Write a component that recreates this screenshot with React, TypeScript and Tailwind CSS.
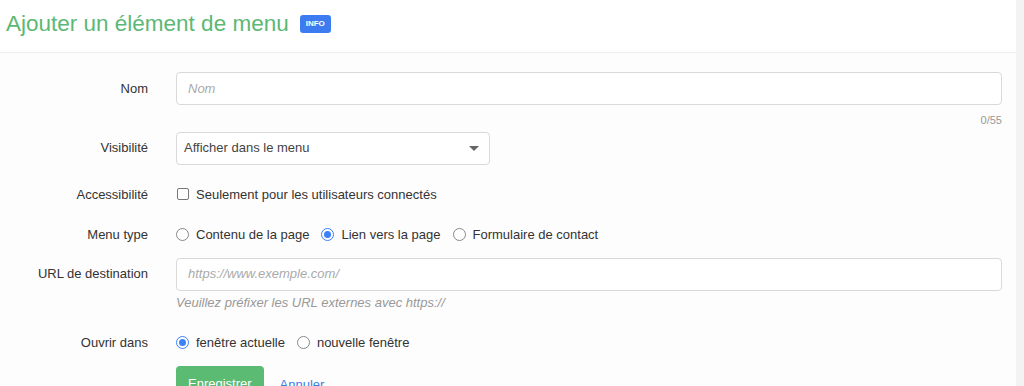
import React from 'react';

const font = { fontFamily: '"Liberation Sans", Arial, sans-serif' };

function Label({ children }: { children: React.ReactNode }): JSX.Element {
  return <div className="w-[148px] shrink-0 text-right text-[13px] text-[#333]">{children}</div>;
}

function Radio({ checked, label }: { checked?: boolean; label: string }): JSX.Element {
  return (
    <label className="flex items-center gap-[7px] text-[13px] text-[#333]">
      {checked ? (
        <span className="flex h-[13px] w-[13px] items-center justify-center rounded-full border border-[#3b82f6] bg-white">
          <span className="h-[7px] w-[7px] rounded-full bg-[#3b82f6]" />
        </span>
      ) : (
        <span className="h-[13px] w-[13px] rounded-full border border-[#888] bg-white" />
      )}
      {label}
    </label>
  );
}

export default function App(): JSX.Element {
  return (
    <div className="flex h-[386px] w-[1024px] overflow-hidden bg-white" style={font}>
      <div className="flex w-[1016px] flex-col">
        <div className="flex h-[53px] shrink-0 items-center gap-[11px] border-b border-[#ececec] bg-white pl-[6px] pb-[4px]">
          <h1 className="text-[22.5px] text-[#5cb874]">Ajouter un élément de menu</h1>
          <span className="rounded-[3px] bg-[#3c7cf0] px-[6px] py-[5px] text-[8px] font-bold leading-none text-white">INFO</span>
        </div>
        <div className="flex flex-1 flex-col bg-[#fdfdfd] pr-[14px]">
          <div className="mt-[19px] flex shrink-0 items-center gap-[28px]">
            <Label>Nom</Label>
            <div className="flex h-[33px] flex-1 items-center rounded-[4px] border border-[#d9d9d9] bg-white px-[11px] text-[13px] italic text-[#aaa]">Nom</div>
          </div>
          <div className="mt-[7px] text-right text-[11px] text-[#999]">0/55</div>
          <div className="mt-[3px] flex shrink-0 items-center gap-[28px]">
            <Label>Visibilité</Label>
            <div className="flex h-[33px] w-[314px] items-center justify-between rounded-[4px] border border-[#d9d9d9] bg-white pl-[7px] pr-[10px] text-[13px] text-[#444]">
              <span>Afficher dans le menu</span>
              <span className="h-0 w-0 border-x-[5px] border-t-[5px] border-x-transparent border-t-[#666]" />
            </div>
          </div>
          <div className="mt-[20px] flex shrink-0 items-center gap-[28px]">
            <Label>Accessibilité</Label>
            <label className="flex items-center gap-[7px] text-[13px] text-[#333]">
              <span className="ml-[1px] h-[12px] w-[12px] rounded-[2px] border border-[#777] bg-white" />
              Seulement pour les utilisateurs connectés
            </label>
          </div>
          <div className="mt-[21px] flex shrink-0 items-center gap-[28px]">
            <Label>Menu type</Label>
            <div className="flex items-center gap-[12px]">
              <Radio label="Contenu de la page" />
              <Radio checked label="Lien vers la page" />
              <Radio label="Formulaire de contact" />
            </div>
          </div>
          <div className="mt-[13px] flex shrink-0 items-center gap-[28px]">
            <Label>URL de destination</Label>
            <div className="flex h-[33px] flex-1 items-center rounded-[4px] border border-[#d9d9d9] bg-white px-[11px] text-[13px] italic text-[#aaa]">https://www.exemple.com/</div>
          </div>
          <div className="mt-[2px] pl-[176px] text-[13px] italic text-[#999]">Veuillez préfixer les URL externes avec https://</div>
          <div className="mt-[21px] flex shrink-0 items-center gap-[28px]">
            <Label>Ouvrir dans</Label>
            <div className="flex items-center gap-[12px]">
              <Radio checked label="fenêtre actuelle" />
              <Radio label="nouvelle fenêtre" />
            </div>
          </div>
          <div className="mt-[13px] flex shrink-0 items-start gap-[16px] pl-[176px]">
            <button className="h-[36px] shrink-0 rounded-[4px] bg-[#5cbb72] px-[12px] text-[13px] text-white">Enregistrer</button>
            <a className="mt-[9px] text-[13px] text-[#3c80e6]">Annuler</a>
          </div>
        </div>
      </div>
      <div className="w-[8px] bg-[#f3f3f3]" />
    </div>
  );
}
